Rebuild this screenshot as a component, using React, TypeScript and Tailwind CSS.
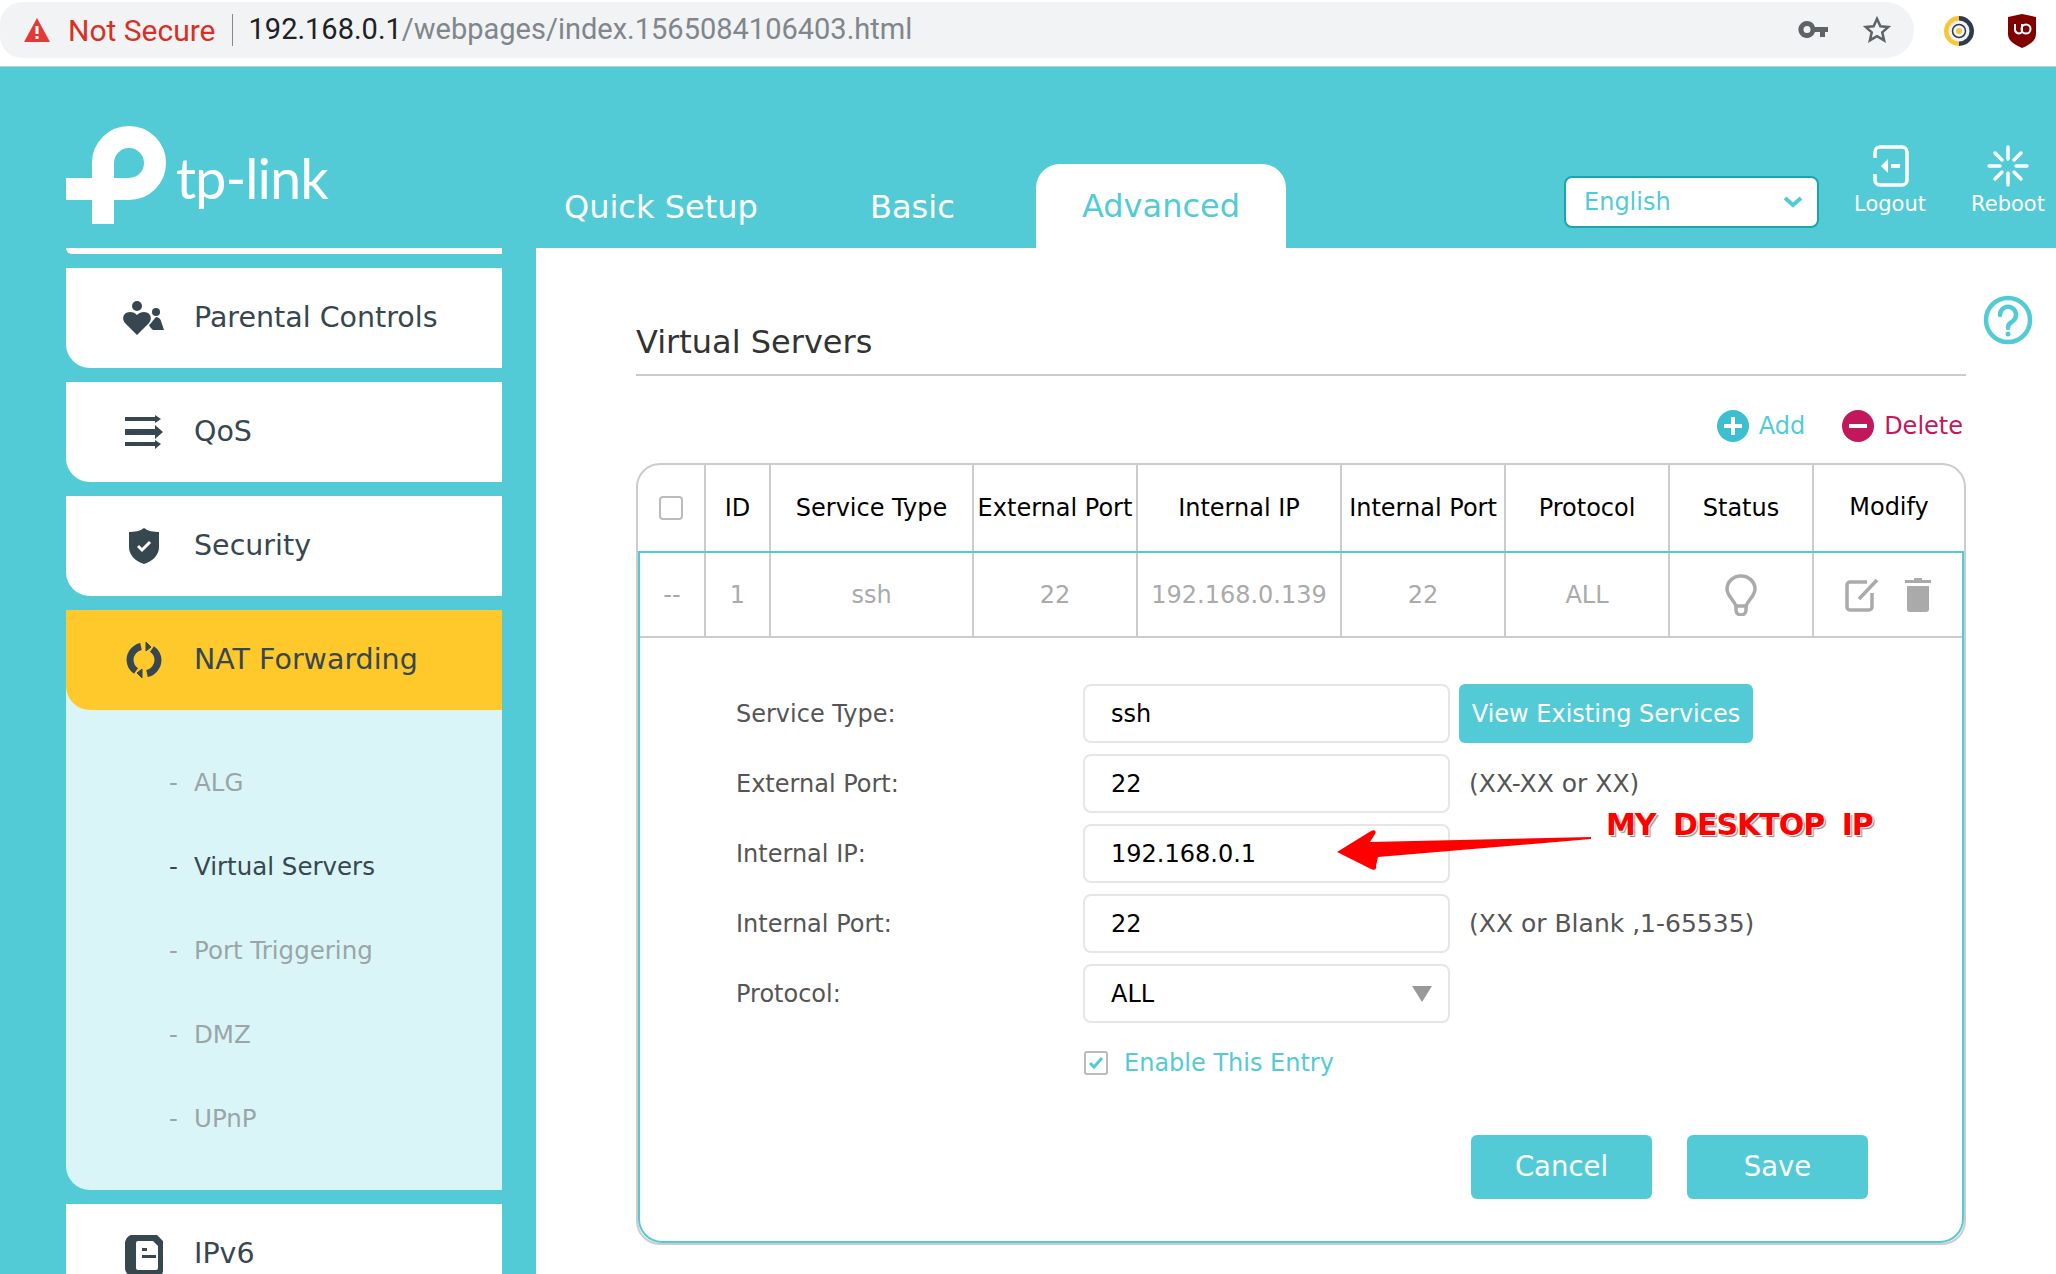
const teal = "text-[#52cbd6]";

function TpLogo() {
	return (
		<svg width="100" height="98" viewBox="0 0 100 98" fill="none" stroke="#fff" strokeWidth="22">
			<path d="M37 98V37A26 26 0 1 1 63 63H0" />
		</svg>
	);
}

function LogoutIcon() {
	return (
		<svg width="38" height="42" viewBox="0 0 38 42" fill="none" stroke="#fff" strokeWidth="3.5">
			<path d="M4 13V7a5 5 0 0 1 5-5h22a5 5 0 0 1 5 5v28a5 5 0 0 1-5 5H9a5 5 0 0 1-5-5v-6" />
			<path d="M10 21l7-7v14z" fill="#fff" stroke="none" />
			<path d="M20 21h9" strokeWidth="4" />
		</svg>
	);
}

function RebootIcon() {
	return (
		<svg width="42" height="42" viewBox="0 0 42 42" stroke="#fff" strokeWidth="3.5" strokeLinecap="round">
			<path d="M21 2v12M21 28v12M2 21h11M29 21h11M8 8l7 7M27 27l7 7M34 8l-7 7M15 27l-7 7" />
		</svg>
	);
}

function HelpIcon() {
	return (
		<svg width="50" height="50" viewBox="0 0 50 50" fill="none" stroke="#52cbd6" strokeWidth="4.5">
			<circle cx="25" cy="25" r="22" />
			<path d="M17 20a8 8 0 1 1 13 6c-3 2-5 3-5 7" strokeLinecap="round" />
			<circle cx="25" cy="39" r="2.5" fill="#52cbd6" stroke="none" />
		</svg>
	);
}

function ParentalIcon() {
	return (
		<svg width="42" height="34" viewBox="0 0 42 34" fill="#37474f">
			<circle cx="14" cy="5" r="5" />
			<path d="M14 34L2 22c-4-5-1-11 5-11 3 0 5 1 7 3 2-2 4-3 7-3 6 0 9 6 5 11z" />
			<circle cx="33" cy="11" r="4" />
			<path d="M33 16c2 0 4 1 5 4l3 9H30l-3-3-1-2c2-1 4-5 7-8z" />
		</svg>
	);
}

function QosIcon() {
	return (
		<svg width="38" height="34" viewBox="0 0 38 34" fill="#37474f">
			<path d="M0 2h30V0l6 4-6 4V6H0zM0 14h30v-4l8 7-8 7v-4H0zM0 27h30v-2l6 4-6 5v-3H0z" />
		</svg>
	);
}

function ShieldIcon() {
	return (
		<svg width="30" height="36" viewBox="0 0 30 36">
			<path d="M15 0c4 3 9 4 15 4v15c0 8-6 14-15 17C6 33 0 27 0 19V4c6 0 11-1 15-4z" fill="#37474f" />
			<path d="M9 18l4 4 8-8" fill="none" stroke="#fff" strokeWidth="3" />
		</svg>
	);
}

function NatIcon() {
	return (
		<svg width="36" height="36" viewBox="0 0 36 36" fill="none" stroke="#37474f" strokeWidth="7">
			<path d="M15 4.500A14 14 0 0 0 4 18a14 14 0 0 0 6 11" />
			<path d="M21 31.500A14 14 0 0 0 32 18a14 14 0 0 0-6-11" />
			<path d="M20 0l5 5-5 4zM16 36l-5-5 5-4z" fill="#37474f" strokeWidth="1" />
		</svg>
	);
}

function Ipv6Icon() {
	return (
		<svg width="38" height="42" viewBox="0 0 38 42">
			<path d="M12 0h20l6 6v30a5 5 0 0 1-5 5H8a8 8 0 0 1-8-8V9a9 9 0 0 1 12-9z" fill="#37474f" />
			<path d="M13 6h15l5 5v22a2 2 0 0 1-2 2H13a2 2 0 0 1-2-2V8a2 2 0 0 1 2-2z" fill="#fff" />
			<path d="M17 13h5v3h-5zM17 20h14v3H17z" fill="#37474f" />
		</svg>
	);
}

function BulbIcon() {
	return (
		<svg width="32" height="42" viewBox="0 0 32 42" fill="none" stroke="#aaa" strokeWidth="3.5">
			<path d="M16 2C8 2 2 8 2 15c0 7 7 11 9 17h10c2-6 9-10 9-17 0-7-6-13-14-13z" />
			<path d="M11 32v4a5 5 0 0 0 10 0v-4" />
		</svg>
	);
}

function EditIcon() {
	return (
		<svg width="34" height="34" viewBox="0 0 34 34" fill="none" stroke="#aaa" strokeWidth="3.5">
			<path d="M27 15v14a3 3 0 0 1-3 3H5a3 3 0 0 1-3-3V7a3 3 0 0 1 3-3h17" />
			<path d="M32 2L14 21" />
		</svg>
	);
}

function TrashIcon() {
	return (
		<svg width="26" height="34" viewBox="0 0 26 34" fill="#aaa">
			<path d="M9 0h8v2h9v3H0V2h9zM2 8h22v23a3 3 0 0 1-3 3H5a3 3 0 0 1-3-3z" />
		</svg>
	);
}

function Annotation() {
	return (
		<div className="absolute left-[1337px] top-[800px] w-[540px] h-[70px]">
			<svg width="256" height="46" viewBox="0 0 256 46" className="absolute left-0 top-[28px]">
				<path d="M0 24L34 3c3-2 6 0 4 3L33 14 254 9v2L41 29l-2 9c1 3-2 5-5 3z" fill="#f00" />
			</svg>
			<span className="absolute left-[269px] top-[2px] whitespace-nowrap font-['DejaVu_Sans'] font-bold text-[30px] leading-[46px] tracking-[-1px] [word-spacing:8px] text-[#f00] [text-shadow:1px_1px_0_#fff,2px_2px_1px_#888]">
				MY DESKTOP IP
			</span>
		</div>
	);
}

const headerColumns = "grid grid-cols-[68px_65px_203px_164px_204px_164px_164px_144px_1fr]";
const rowColumns = "grid grid-cols-[66px_65px_203px_164px_204px_164px_164px_144px_1fr]";
const headerCells = ["", "ID", "Service Type", "External Port", "Internal IP", "Internal Port", "Protocol", "Status", "Modify"];
const rowCells = ["--", "1", "ssh", "22", "192.168.0.139", "22", "ALL"];
const sideItems = [
	{ label: "Parental Controls", icon: <ParentalIcon /> },
	{ label: "QoS", icon: <QosIcon /> },
	{ label: "Security", icon: <ShieldIcon /> }
];
const subItems = ["ALG", "Virtual Servers", "Port Triggering", "DMZ", "UPnP"];

function FormRow({ label, value, children }: { label: string; value: string; children?: React.ReactNode }) {
	return (
		<div className="flex items-center h-[59px] mb-[11px]">
			<span className="w-[443px] pl-[96px] text-[#555] text-[24px]">{label}</span>
			<div className="w-[367px] h-[59px] border-2 border-[#e6e6e6] rounded-lg pl-[26px] flex items-center text-[24px] text-black">
				{value}
			</div>
			{children}
		</div>
	);
}

export default function App() {
	return (
		<div className="relative w-[2056px] h-[1274px] overflow-hidden bg-white font-['DejaVu_Sans',sans-serif]">
			{/* browser bar */}
			<div className="h-[67px] border-b border-[#c8c8c8] flex items-start pt-[2px]">
				<div className="w-[1914px] h-[56px] bg-[#f1f3f4] rounded-r-[28px] rounded-l-[22px] flex items-center pl-[24px] pr-[22px] font-['Roboto',sans-serif] text-[29px]">
					<svg width="26" height="24" viewBox="0 0 26 24">
						<path d="M13 0l13 24H0z" fill="#e53935" />
						<path d="M11.500 8h3v8h-3zM11.500 18h3v3h-3z" fill="#fff" />
					</svg>
					<span className="ml-[18px] text-[#d93025] text-[30px]">Not Secure</span>
					<span className="w-px h-[32px] bg-[#888] mx-[16px]" />
					<span className="text-[#202124]">192.168.0.1</span>
					<span className="text-[#80868b]">/webpages/index.1565084106403.html</span>
					<svg width="30" height="18" viewBox="0 0 30 18" className="ml-auto mr-[34px]" fill="#5f6368">
						<path d="M9 0a8.500 8.500 0 0 1 8 6h13v5h-3v5h-5v-5h-5a8.500 8.500 0 1 1-8-11zm0 5a3.500 3.500 0 1 0 0 7 3.500 3.500 0 0 0 0-7z" />
					</svg>
					<svg width="30" height="30" viewBox="0 0 24 24" fill="none" stroke="#5f6368" strokeWidth="2">
						<path d="M12 3l2.700 6 6.300.6-4.800 4.300 1.500 6.400L12 17l-5.700 3.300 1.500-6.400L3 9.600 9.300 9z" />
					</svg>
				</div>
				<svg width="32" height="32" viewBox="0 0 32 32" fill="none" className="ml-[29px] mt-[13px]">
					<path d="M16 1a15 15 0 0 0 0 30z" fill="#fbc536" />
					<path d="M16 1a15 15 0 0 1 0 30z" fill="#2f3b4c" />
					<circle cx="16" cy="16" r="10.500" fill="#f1f3f4" />
					<circle cx="16" cy="16" r="6.500" stroke="#2f3b4c" strokeWidth="1.500" />
					<circle cx="16" cy="16" r="3" fill="#fbc536" />
				</svg>
				<svg width="28" height="34" viewBox="0 0 28 34" className="ml-[33px] mt-[12px]">
					<path d="M14 0l14 3v17c0 7-7 11-14 14C7 31 0 27 0 20V3z" fill="#800000" />
					<path d="M7 10v6a4 4 0 0 0 7 2V10" fill="none" stroke="#fff" strokeWidth="2" />
					<circle cx="18" cy="15" r="4.500" fill="none" stroke="#fff" strokeWidth="2" />
				</svg>
			</div>

			{/* header */}
			<div className="h-[181px] bg-[#52cbd6] flex items-end text-white">
				<div className="w-[564px] shrink-0 self-start pl-[66px] pt-[59px] flex items-start">
					<TpLogo />
					<span className="ml-[10px] mt-[20px] font-['Lato',sans-serif] text-[56px] leading-[64px] tracking-[-1px]">tp-link</span>
				</div>
				<span className="w-[306px] shrink-0 h-[82px] flex items-center text-[32px]">Quick Setup</span>
				<span className="w-[166px] shrink-0 h-[82px] flex items-center text-[32px]">Basic</span>
				<span className={`w-[250px] shrink-0 h-[84px] bg-white rounded-t-[24px] flex items-center justify-center text-[32px] ${teal}`}>Advanced</span>
				<div className="ml-[278px] shrink-0 w-[255px] h-[52px] mb-[20px] bg-white border-2 border-[#1aa5ad] rounded-lg flex items-center justify-between pl-[18px] pr-[14px] text-[24px] text-[#52cbd6]">
					English
					<svg width="20" height="12" viewBox="0 0 20 12" fill="none" stroke="#52cbd6" strokeWidth="4">
						<path d="M2 2l8 7 8-7" />
					</svg>
				</div>
				<div className="w-[100px] shrink-0 ml-[21px] mb-[31px] flex flex-col items-center text-[21px] leading-[26px]">
					<LogoutIcon />
					<span className="mt-[4px]">Logout</span>
				</div>
				<div className="w-[96px] shrink-0 ml-[20px] mb-[31px] flex flex-col items-center text-[21px] leading-[26px]">
					<RebootIcon />
					<span className="mt-[4px] whitespace-nowrap">Reboot</span>
				</div>
			</div>

			<div className="flex h-[1026px]">
				{/* sidebar */}
				<div className="w-[536px] shrink-0 bg-[#52cbd6] pl-[66px] pr-[34px] overflow-hidden">
					<div className="h-[6px] bg-white rounded-bl-[18px]" />
					{sideItems.map(item => (
						<div key={item.label} className="h-[100px] mt-[14px] bg-white rounded-bl-[24px] flex items-center text-[#37474f] text-[28.5px]">
							<span className="w-[128px] flex justify-center pl-[28px]">{item.icon}</span>
							<span>{item.label}</span>
						</div>
					))}
					<div className="mt-[14px] bg-[#daf5f7] rounded-bl-[24px] h-[580px]">
						<div className="h-[100px] bg-[#ffc92c] rounded-bl-[24px] flex items-center text-[#37474f] text-[28.5px]">
							<span className="w-[128px] flex justify-center pl-[28px]"><NatIcon /></span>
							<span>NAT Forwarding</span>
						</div>
						<div className="pt-[31px]">
							{subItems.map(sub => (
								<div key={sub} className={`h-[84px] flex items-center pl-[103px] text-[24.5px] ${sub === "Virtual Servers" ? "text-[#37474f]" : "text-[#9aa5a8]"}`}>
									<span className="w-[25px]">-</span>
									{sub}
								</div>
							))}
						</div>
					</div>
					<div className="h-[100px] mt-[14px] bg-white flex items-center text-[#37474f] text-[28.5px]">
						<span className="w-[128px] flex justify-center pl-[28px] pt-[4px]"><Ipv6Icon /></span>
						<span>IPv6</span>
					</div>
				</div>

				{/* content */}
				<div className="relative flex-1 pl-[100px] pr-[90px]">
					<div className="absolute right-[23px] top-[47px]"><HelpIcon /></div>
					<div className="h-[128px] border-b-2 border-[#ccc] flex items-end pb-[9px] text-[32px] text-[#333] leading-[46px]">Virtual Servers</div>
					<div className="h-[87px] pt-[13px] flex items-center justify-end pr-[3px] text-[24px]">
						<svg width="32" height="32" viewBox="0 0 32 32">
							<circle cx="16" cy="16" r="16" fill="#3dbfd0" />
							<path d="M14 7h4v7h7v4h-7v7h-4v-7H7v-4h7z" fill="#fff" />
						</svg>
						<span className={`ml-[10px] ${teal}`}>Add</span>
						<svg width="32" height="32" viewBox="0 0 32 32" className="ml-[37px]">
							<circle cx="16" cy="16" r="16" fill="#c2185b" />
							<path d="M7 14h18v4H7z" fill="#fff" />
						</svg>
						<span className="ml-[10px] text-[#c2185b]">Delete</span>
					</div>

					{/* table */}
					<div className="w-[1330px] h-[782px] border-2 border-[#ccc] rounded-[24px] text-[24px]">
						<div className={`${headerColumns} h-[86px] pb-[2px]`}>
							{headerCells.map((text, i) => (
								<div key={i} className={`flex items-center justify-center whitespace-nowrap text-black ${i < 8 ? "border-r-2 border-[#ccc] -mb-[2px]" : ""}`}>
									{i === 0 ? <span className="w-[24px] h-[24px] border-2 border-[#bbb] rounded-[4px]" /> : text}
								</div>
							))}
						</div>
						<div className="h-[692px] border-2 border-[#52cbd6] rounded-b-[24px]">
							<div className={`${rowColumns} h-[85px] border-b-2 border-[#ccc] text-[#aaa]`}>
								{rowCells.map((text, i) => (
									<div key={i} className="flex items-center justify-center whitespace-nowrap border-r-2 border-[#ccc]">{text}</div>
								))}
								<div className="flex items-center justify-center border-r-2 border-[#ccc]"><BulbIcon /></div>
								<div className="flex items-center justify-center gap-[26px]"><EditIcon /><TrashIcon /></div>
							</div>
							<div className="pt-[46px]">
								<FormRow label="Service Type:" value="ssh">
									<div className="ml-[9px] w-[294px] h-[59px] bg-[#52cbd6] rounded-md flex items-center justify-center text-white text-[24px]">View Existing Services</div>
								</FormRow>
								<FormRow label="External Port:" value="22">
									<span className="ml-[19px] text-[#555] text-[25px]">(XX-XX or XX)</span>
								</FormRow>
								<FormRow label="Internal IP:" value="192.168.0.1" />
								<FormRow label="Internal Port:" value="22">
									<span className="ml-[19px] text-[#555] text-[25px]">(XX or Blank ,1-65535)</span>
								</FormRow>
								<div className="flex items-center h-[59px]">
									<span className="w-[443px] pl-[96px] text-[#555]">Protocol:</span>
									<div className="w-[367px] h-[59px] border-2 border-[#e6e6e6] rounded-lg pl-[26px] pr-[16px] flex items-center justify-between text-black">
										ALL
										<svg width="20" height="16" viewBox="0 0 20 16"><path d="M0 0h20L10 16z" fill="#999" /></svg>
									</div>
								</div>
								<div className={`flex items-center ml-[444px] mt-[22px] ${teal}`}>
									<span className="w-[24px] h-[24px] border-2 border-[#bbb] rounded-[3px] flex items-center justify-center">
										<svg width="16" height="14" viewBox="0 0 16 14" fill="none" stroke="#52cbd6" strokeWidth="3"><path d="M2 7l4 4 8-9" /></svg>
									</span>
									<span className="ml-[16px]">Enable This Entry</span>
								</div>
								<div className="flex justify-end gap-[35px] pr-[94px] mt-[54px]">
									<div className="w-[181px] h-[64px] bg-[#52cbd6] rounded-md flex items-center justify-center text-white text-[27.5px]">Cancel</div>
									<div className="w-[181px] h-[64px] bg-[#52cbd6] rounded-md flex items-center justify-center text-white text-[27.5px]">Save</div>
								</div>
							</div>
						</div>
					</div>
				</div>
			</div>

			<Annotation />
		</div>
	);
}
